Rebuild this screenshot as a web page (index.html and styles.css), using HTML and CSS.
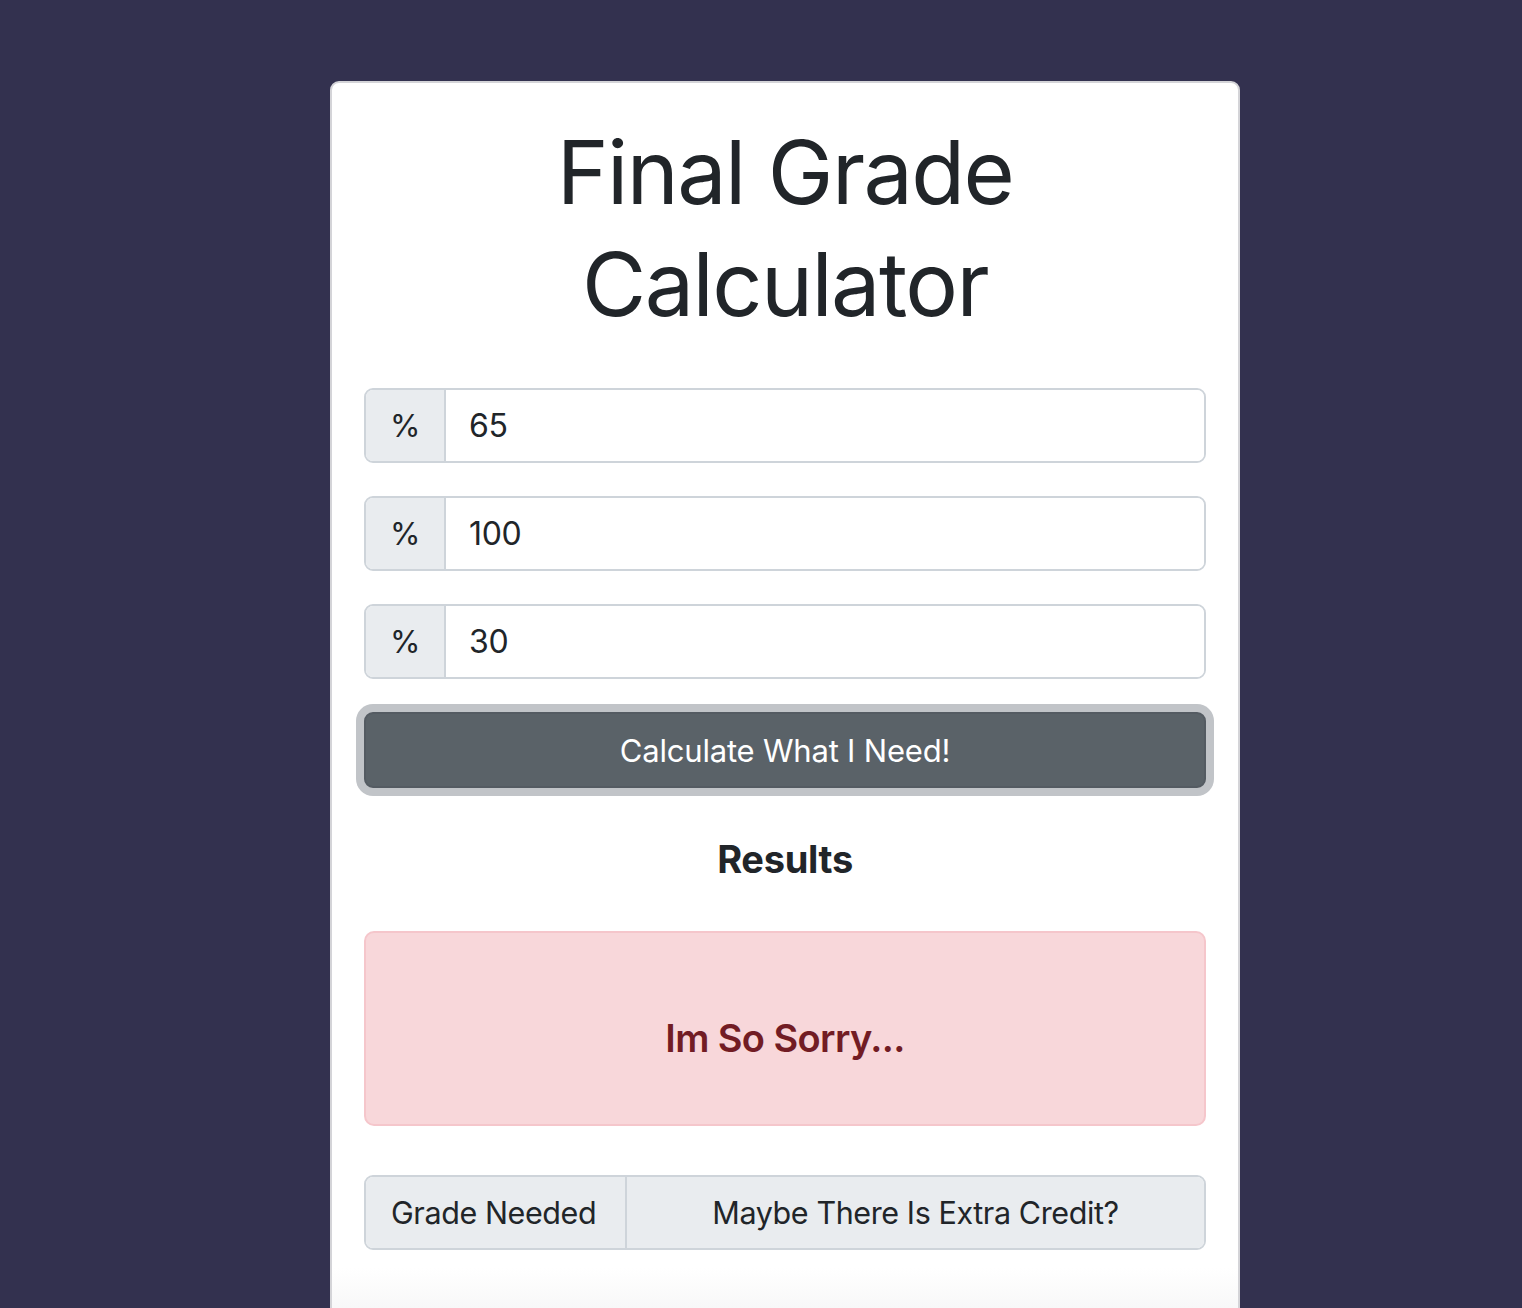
FILE: index.html
```html
<!DOCTYPE html>
<html lang="en">
<head>
<meta charset="utf-8">
<title>Final Grade Calculator</title>
<link rel="stylesheet" href="styles.css">
</head>
<body>
<div class="page">
  <div class="card">
    <div class="card-body">
      <h1 class="title">Final Grade<br>Calculator</h1>
      <div class="input-group">
        <span class="addon">%</span>
        <input class="field" type="text" value="65">
      </div>
      <div class="input-group">
        <span class="addon">%</span>
        <input class="field" type="text" value="100">
      </div>
      <div class="input-group">
        <span class="addon">%</span>
        <input class="field" type="text" value="30">
      </div>
      <button class="btn" type="button">Calculate What I Need!</button>
      <h5 class="results">Results</h5>
      <div class="alert">
        <h4 class="alert-text">Im So Sorry...</h4>
      </div>
      <div class="input-group output">
        <span class="addon label">Grade Needed</span>
        <span class="addon value">Maybe There Is Extra Credit?</span>
      </div>
    </div>
    <div class="card-fade"></div>
  </div>
</div>
</body>
</html>
```

FILE: styles.css
```css
html, body {
  margin: 0;
  padding: 0;
  background: #33314f;
  height: 100%;
  overflow: hidden;
}

body {
  font-family: Inter, "Helvetica Neue", Arial, sans-serif;
  color: #212529;
}

.page {
  padding: 81px 0 0 330px;
}

.card {
  width: 906px;
  background: #ffffff;
  border: 2px solid #d4d4d8;
  border-radius: 9px;
  overflow: hidden;
}

.card-body {
  padding: 33px 32px 18px 32px;
  display: flex;
  flex-direction: column;
}

.title {
  margin: 0 0 48px 0;
  text-align: center;
  font-size: 88px;
  font-weight: 400;
  line-height: 112px;
  letter-spacing: -1.6px;
  color: #212529;
}

.input-group {
  display: flex;
  height: 75px;
  margin-bottom: 33px;
  border: 2px solid #ced4da;
  border-radius: 9px;
  overflow: hidden;
  box-sizing: border-box;
}

.addon {
  width: 78px;
  flex: none;
  display: flex;
  align-items: center;
  justify-content: center;
  background: #e9ecef;
  border-right: 2px solid #ced4da;
  font-size: 31px;
  letter-spacing: -0.3px;
  color: #212529;
}

.field {
  flex: 1;
  border: 0;
  outline: 0;
  padding: 0 23px;
  font-family: inherit;
  font-size: 32px;
  letter-spacing: -0.3px;
  color: #212529;
  background: #ffffff;
}

.btn {
  margin: 0;
  height: 76px;
  border: 2px solid #545b62;
  border-radius: 9px;
  background: #5a6268;
  color: #ffffff;
  font-family: inherit;
  font-size: 31px;
  font-weight: 400;
  letter-spacing: -0.2px;
  box-shadow: 0 0 0 8px #c1c4c8;
}

.results {
  margin: 48px 0 0 0;
  text-align: center;
  font-size: 38px;
  font-weight: 700;
  line-height: 46px;
  letter-spacing: -0.3px;
}

.alert {
  margin-top: 49px;
  height: 195px;
  box-sizing: border-box;
  background: #f8d7da;
  border: 2px solid #f5c6cb;
  border-radius: 10px;
  display: flex;
  align-items: center;
  justify-content: center;
  padding-top: 18px;
}

.alert-text {
  margin: 0;
  font-size: 38px;
  font-weight: 600;
  color: #721c24;
  letter-spacing: -0.6px;
}

.output {
  margin-top: 49px;
  margin-bottom: 0;
}

.addon.label {
  width: 261px;
  justify-content: flex-start;
  padding-left: 25px;
  box-sizing: border-box;
  font-size: 30.5px;
  letter-spacing: -0.4px;
}

.addon.value {
  flex: 1;
  width: auto;
  border-right: 0;
  font-size: 30.5px;
  letter-spacing: -0.4px;
}

.card-fade {
  height: 60px;
  background: linear-gradient(#ffffff, #f4f4f5);
}
```
